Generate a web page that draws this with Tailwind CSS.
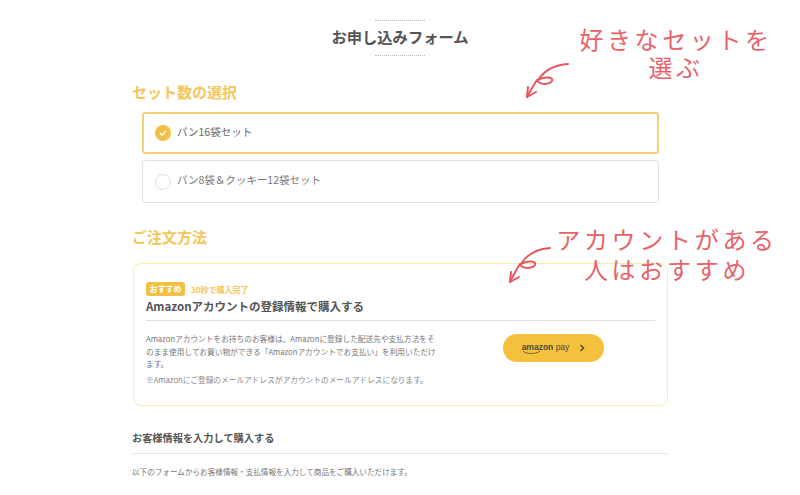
<!DOCTYPE html>
<html lang="ja">
<head>
  <meta charset="UTF-8" />
  <title>お申し込みフォーム</title>
  <script src="https://cdn.jsdelivr.net/npm/@tailwindcss/browser@4"></script>
</head>
<body class="bg-white overflow-hidden font-['Noto_Sans_CJK_JP','Noto_Sans',sans-serif] text-[#555]">
<div class="relative w-[800px] h-[495px] overflow-hidden">
  <main class="w-[536px] ml-[132px] flex flex-col">

    <!-- Title -->
    <div class="mt-[20px] flex flex-col items-center">
      <div class="w-[50px] border-t border-dotted border-[#bbb]"></div>
      <h1 class="h-[34px] leading-[31px] text-[15.3px] font-bold text-[#555]">お申し込みフォーム</h1>
      <div class="w-[50px] border-t border-dotted border-[#bbb]"></div>
    </div>

    <!-- Set selection -->
    <h2 class="mt-[25px] h-[22px] leading-[21px] text-[15px] font-bold text-[#f3c75a]">セット数の選択</h2>
    <div class="mt-[9px] ml-[10px] w-[517px] flex flex-col gap-[6px]">
      <label class="h-[42px] flex items-center gap-[6px] pl-[11px] rounded-[3px] border-2 border-[#f3d27a] text-[10.5px] text-[#666]">
        <span class="w-[16px] h-[16px] rounded-full bg-[#f2c044] flex items-center justify-center">
          <svg class="w-[10px] h-[10px]" viewBox="0 0 10 10" fill="none" stroke="#fff" stroke-width="1.6"><path d="M2 5.2l2.1 2L8 3"/></svg>
        </span>
        <span class="-mt-[3px]">パン16袋セット</span>
      </label>
      <label class="h-[43px] flex items-center gap-[6px] pl-[12px] rounded-[3px] border border-[#e2e2e2] text-[10.5px] text-[#777]">
        <span class="w-[16px] h-[16px] rounded-full border border-[#ddd]"></span>
        <span class="-mt-[3px]">パン8袋＆クッキー12袋セット</span>
      </label>
    </div>

    <!-- Order method -->
    <h2 class="mt-[23px] h-[22px] leading-[21px] text-[15px] font-bold text-[#f3c75a]">ご注文方法</h2>
    <section class="mt-[15px] ml-px w-[535px] h-[143px] rounded-[8px] border border-[#f8efa8] pt-[18px] pl-[12px] pr-[12px]">
      <div class="flex items-center gap-[6px]">
        <span class="w-[39px] h-[14px] rounded-[3px] bg-[#f2c044] text-white text-[8px] font-bold leading-[13px] text-center">おすすめ</span>
        <span class="text-[8px] leading-[13px] font-bold text-[#f3c75a]">30秒で購入完了</span>
      </div>
      <h3 class="mt-[1px] h-[19px] leading-[18px] text-[11.5px] font-bold text-[#555]">Amazonアカウントの登録情報で購入する</h3>
      <div class="mt-[4px] border-t border-[#e2e2e2]"></div>
      <div class="flex">
        <div class="w-[291px] mt-[12px] text-[7.7px] leading-[12.5px] text-[#777] whitespace-nowrap">
          <p>Amazonアカウントをお持ちのお客様は、Amazonに登録した配送先や支払方法をそ<br>のまま使用してお買い物ができる「Amazonアカウントでお支払い」を利用いただけ<br>ます。</p>
          <p class="mt-[3.5px] text-[#888]">※Amazonにご登録のメールアドレスがアカウントのメールアドレスになります。</p>
        </div>
        <button class="ml-[66px] mt-[13px] w-[101px] h-[28px] rounded-full bg-[#f5c13c] flex items-center justify-center gap-[10px] text-[#4a4a3a] font-['Liberation_Sans',sans-serif]">
          <span class="relative text-[8.5px] leading-[12px] -mt-[3px]"><b>amazon</b> pay
            <svg class="absolute left-0 top-[9px] w-[20px] h-[5px]" viewBox="0 0 22 5" fill="none" stroke="#4a4a3a" stroke-width="0.8"><path d="M1 1c5 3.5 13 3.5 19 0"/></svg>
          </span>
          <svg class="w-[6px] h-[8px]" viewBox="0 0 6 8" fill="none" stroke="#4a4a3a" stroke-width="1.5"><path d="M1.5 1l3 3-3 3"/></svg>
        </button>
      </div>
    </section>

    <!-- Customer info -->
    <h3 class="mt-[24px] h-[16px] leading-[16px] text-[10.2px] font-bold text-[#555]">お客様情報を入力して購入する</h3>
    <div class="mt-[7px] border-t border-[#e6e6e6]"></div>
    <p class="mt-[12px] text-[7.6px] leading-[12px] text-[#777]">以下のフォームからお客様情報・支払情報を入力して商品をご購入いただけます。</p>
  </main>

  <!-- Handwritten notes over the screenshot -->
  <div class="absolute left-[562px] top-[25px] w-[228px] text-center text-[24px] leading-[28px] tracking-[3.6px] text-[#e8626a]">好きなセットを<br>選ぶ</div>
  <svg class="absolute left-[520px] top-[58px] w-[55px] h-[46px]" viewBox="0 0 55 46" fill="none" stroke="#e8555f" stroke-width="2" stroke-linecap="round" stroke-linejoin="round">
    <path d="M48 6C34 7 24 13 18 22c7-4 16-3 14 1-3 4-13 4-15-1-4 6-7 12-10 17"/>
    <path d="M7 39l1-10M7 39l9-5"/>
  </svg>

  <div class="absolute left-[540px] top-[224px] w-[254px] text-center text-[24px] leading-[30px] tracking-[3.7px] text-[#e8626a]">アカウントがある<br>人はおすすめ</div>
  <svg class="absolute left-[503px] top-[240px] w-[55px] h-[46px]" viewBox="0 0 55 46" fill="none" stroke="#e8555f" stroke-width="2" stroke-linecap="round" stroke-linejoin="round">
    <path d="M47 8C34 9 24 14 18 24c7-4 16-3 14 1-3 4-13 4-15-1-4 6-7 12-10 18"/>
    <path d="M7 42l1-10M7 42l9-5"/>
  </svg>
</div>
</body>
</html>
